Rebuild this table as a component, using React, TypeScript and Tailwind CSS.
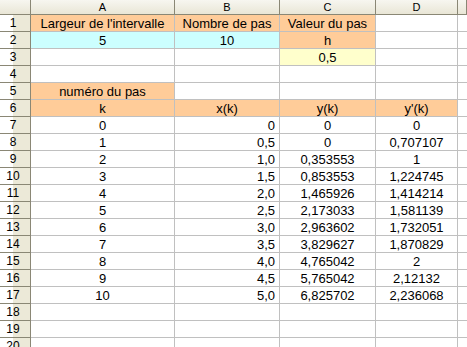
import React from 'react';

type Cell = { v?: string; bg?: string; align?: 'c' | 'r' };

const cols = ['A', 'B', 'C', 'D', ''];

const O = 'bg-[#ffcc99]';
const CY = 'bg-[#ccffff]';
const Y = 'bg-[#ffffcc]';

const xs = ['0', '0,5', '1,0', '1,5', '2,0', '2,5', '3,0', '3,5', '4,0', '4,5', '5,0'];
const ys = ['0', '0', '0,353553', '0,853553', '1,465926', '2,173033', '2,963602', '3,829627', '4,765042', '5,765042', '6,825702'];
const yps = ['0', '0,707107', '1', '1,224745', '1,414214', '1,581139', '1,732051', '1,870829', '2', '2,12132', '2,236068'];

const rows: Cell[][] = [
  [
    { v: 'Largeur de l\'intervalle', bg: O },
    { v: 'Nombre de pas', bg: O },
    { v: 'Valeur du pas', bg: O },
    {},
  ],
  [
    { v: '5', bg: CY },
    { v: '10', bg: CY },
    { v: 'h', bg: O },
    {},
  ],
  [{}, {}, { v: '0,5', bg: Y }, {}],
  [{}, {}, {}, {}],
  [{ v: 'numéro du pas', bg: O }, {}, {}, {}],
  [
    { v: 'k', bg: O },
    { v: 'x(k)', bg: O },
    { v: 'y(k)', bg: O },
    { v: "y'(k)", bg: O },
  ],
  ...xs.map((x, i) => [
    { v: String(i) },
    { v: x, align: 'r' as const },
    { v: ys[i] },
    { v: yps[i] },
  ]),
  [{}, {}, {}, {}],
  [{}, {}, {}, {}],
  [{}, {}, {}, {}],
];

const grid = 'grid grid-cols-[31px_144px_105px_96px_82px_1fr]';

export default function App() {
  return (
    <div className="w-[467px] h-[347px] overflow-hidden bg-white text-black font-['Liberation_Sans',Arial,sans-serif]">
      {/* column headers */}
      <div className={grid}>
        <div className="h-[15px] border-r border-b border-[#8a8775] bg-[linear-gradient(#f7f6f0,#e9e6d6)]" />
        {cols.map((c, i) => (
          <div
            key={i}
            className="h-[15px] border-r border-b border-[#8a8775] bg-[linear-gradient(#f7f6f0,#e9e6d6)] flex items-center justify-center text-[11px] leading-none"
          >
            {c}
          </div>
        ))}
      </div>

      {rows.map((r, ri) => (
        <div key={ri} className={grid}>
          <div className="h-[17px] border-r border-b border-[#8a8775] bg-[linear-gradient(90deg,#ffffff_13px,#ece9d8_13px)] flex items-center justify-center pr-[4px] text-[12px] leading-none">
            {ri + 1}
          </div>
          {r.map((c, ci) => (
            <div
              key={ci}
              className={`h-[17px] border-r border-b border-[#c0c0c0] flex items-center text-[13px] leading-none whitespace-nowrap overflow-hidden ${
                c.bg ?? 'bg-white'
              } ${c.align === 'r' ? 'justify-end pr-[4px]' : 'justify-center'}`}
            >
              {c.v}
            </div>
          ))}
          <div className="h-[17px] border-b border-[#c0c0c0]" />
        </div>
      ))}
    </div>
  );
}
